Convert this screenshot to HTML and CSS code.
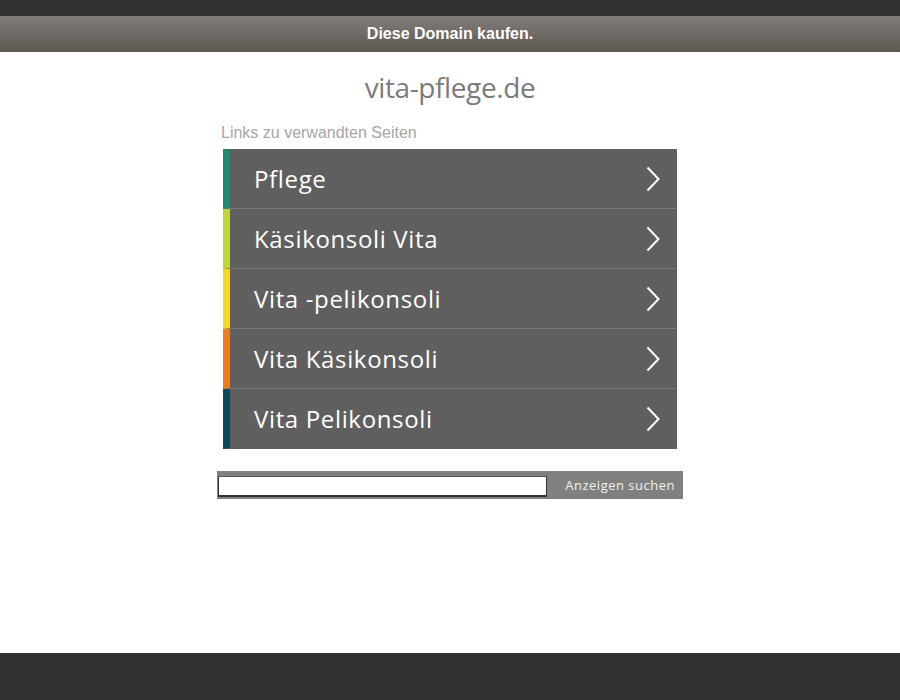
FILE: index.html
```html
<!DOCTYPE html>
<html lang="de">
<head>
<meta charset="utf-8">
<title>vita-pflege.de</title>
<link rel="stylesheet" href="styles.css">
</head>
<body>
<div class="page">
  <div class="topbar"></div>
  <div class="buybar"><a class="buylink" href="#">Diese Domain kaufen.</a></div>
  <main class="main">
    <h1 class="domain">vita-pflege.de</h1>
    <div class="label">Links zu verwandten Seiten</div>
    <ul class="links">
      <li class="item c1"><span class="txt">Pflege</span><svg class="chev" width="14" height="26" viewBox="0 0 14 26"><path d="M1.5 1.5 L12.5 13 L1.5 24.5" fill="none" stroke="#fff" stroke-width="2"/></svg></li>
      <li class="item c2"><span class="txt">Käsikonsoli Vita</span><svg class="chev" width="14" height="26" viewBox="0 0 14 26"><path d="M1.5 1.5 L12.5 13 L1.5 24.5" fill="none" stroke="#fff" stroke-width="2"/></svg></li>
      <li class="item c3"><span class="txt">Vita -pelikonsoli</span><svg class="chev" width="14" height="26" viewBox="0 0 14 26"><path d="M1.5 1.5 L12.5 13 L1.5 24.5" fill="none" stroke="#fff" stroke-width="2"/></svg></li>
      <li class="item c4"><span class="txt">Vita Käsikonsoli</span><svg class="chev" width="14" height="26" viewBox="0 0 14 26"><path d="M1.5 1.5 L12.5 13 L1.5 24.5" fill="none" stroke="#fff" stroke-width="2"/></svg></li>
      <li class="item c5"><span class="txt">Vita Pelikonsoli</span><svg class="chev" width="14" height="26" viewBox="0 0 14 26"><path d="M1.5 1.5 L12.5 13 L1.5 24.5" fill="none" stroke="#fff" stroke-width="2"/></svg></li>
    </ul>
    <form class="search">
      <input class="query" type="text">
      <button class="btn" type="button">Anzeigen suchen</button>
    </form>
  </main>
  <footer class="footer"></footer>
</div>
</body>
</html>
```
FILE: styles.css
```css
html, body {
  margin: 0;
  padding: 0;
  background: #fff;
}
.page {
  min-height: 700px;
  display: flex;
  flex-direction: column;
}
.topbar {
  height: 16px;
  background: #313131;
}
.buybar {
  height: 36px;
  background: linear-gradient(#827d79, #5d5752);
  display: flex;
  align-items: center;
  justify-content: center;
}
.buylink {
  font-family: "Liberation Sans", Arial, sans-serif;
  font-weight: bold;
  font-size: 16px;
  color: #fff;
  text-decoration: none;
}
.main {
  width: 466px;
  margin: 0 auto;
}
.domain {
  margin: 19px 0 0;
  font-family: "Open Sans", sans-serif;
  font-weight: 400;
  font-size: 28px;
  line-height: 32px;
  letter-spacing: -0.4px;
  color: #7b7b7b;
  text-align: center;
}
.label {
  margin-top: 20px;
  padding-left: 4px;
  font-family: "Liberation Sans", Arial, sans-serif;
  font-size: 16px;
  line-height: 20px;
  color: #a6a6a6;
}
.links {
  list-style: none;
  margin: 6px 6px 0;
  padding: 0;
}
.item {
  height: 59px;
  border-left: 7px solid #1e8b6f;
  border-bottom: 1px solid #777;
  background: #5f5f5f;
  display: flex;
  align-items: center;
  justify-content: space-between;
  padding: 0 17px 0 24px;
}
.item:last-child {
  border-bottom-color: #5f5f5f;
}
.c1 { border-left-color: #1e8b6f; }
.c2 { border-left-color: #c0d731; }
.c3 { border-left-color: #f4dc1c; }
.c4 { border-left-color: #f47b12; }
.c5 { border-left-color: #0b4a5e; }
.txt {
  font-family: "Open Sans", sans-serif;
  font-size: 24px;
  color: #fff;
  letter-spacing: 0.65px;
}
.chev {
  display: block;
}
.search {
  margin: 22px 0 0;
  height: 28px;
  background: #808080;
  display: flex;
  align-items: flex-end;
  padding-bottom: 2px;
  box-sizing: border-box;
}
.query {
  margin: 0 0 0 1px;
  width: 329px;
  height: 21px;
  box-sizing: border-box;
  border: 1px solid #333;
  border-top-color: #555;
  border-bottom: 2px solid #333;
  background: #fff;
  padding: 0;
}
.btn {
  flex: 1;
  height: 24px;
  align-self: center;
  border: 0;
  background: transparent;
  color: #f2f2f2;
  font-family: "Open Sans", sans-serif;
  font-size: 13px;
  letter-spacing: 0.5px;
  text-align: right;
  padding: 0 8px 0 0;
  margin-top: 2px;
}
.footer {
  margin-top: auto;
  height: 47px;
  background: #323232;
}
```
